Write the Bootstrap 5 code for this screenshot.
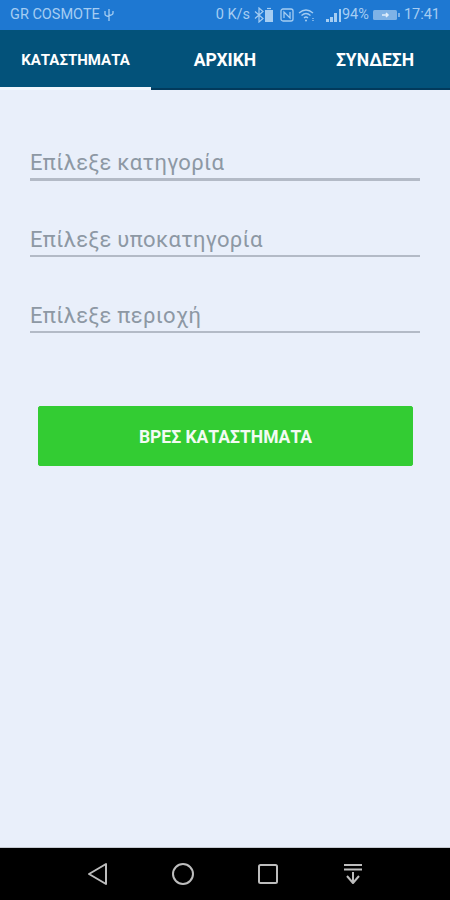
<!DOCTYPE html>
<html lang="el">
<head>
    <meta charset="UTF-8">
    <meta name="viewport" content="width=device-width, initial-scale=1.0">
    <title>Καταστήματα</title>
    <link href="https://cdn.jsdelivr.net/npm/bootstrap@5.3.0/dist/css/bootstrap.min.css" rel="stylesheet">
    <script src="https://cdn.jsdelivr.net/npm/bootstrap@5.3.0/dist/js/bootstrap.bundle.min.js"></script>
    <style>
        html, body {
            height: 900px;
            overflow: hidden;
        }
        body {
            background: #e9effa;
            font-family: Roboto, "Noto Sans", sans-serif;
        }
        .app-shell {
            height: 900px;
        }
        .status-strip {
            height: 30px;
            background: #1e78d2;
            color: #a5cdf2;
            font-size: 14.5px;
            padding: 0 10px;
        }
        .status-strip svg {
            display: block;
        }
        .signal-gap {
            margin-left: 10px;
        }
        .tab-strip {
            height: 60px;
            background: #03527a;
        }
        .tab-item {
            color: #fff;
            font-weight: 700;
            font-size: 17.5px;
            white-space: nowrap;
            height: 60px;
            text-decoration: none;
            padding-top: 3px;
            border-bottom: 2px solid #023a5c;
        }
        .tab-item.is-on {
            width: 151px;
            font-size: 15px;
            border-bottom: 3px solid #f1f5fc;
            padding-top: 4px;
        }
        .tab-mid {
            width: 148px;
        }
        .tab-end {
            width: 151px;
            padding-left: 1px;
        }
        .form-area {
            padding: 51px 30px 0;
        }
        .pick-field {
            height: 40px;
            font-size: 22px;
            line-height: 1;
            color: #8d98a4;
            border-bottom: 2px solid #b3bac6;
            margin-bottom: 36px;
            padding-top: 12px;
            letter-spacing: 0.3px;
        }
        .pick-field.first-pick {
            border-bottom-width: 3px;
            padding-top: 11px;
        }
        .find-btn {
            display: block;
            width: 375px;
            height: 60px;
            margin: 73px 0 0 8px;
            background: #33cc33;
            border-color: #33cc33;
            color: #f2fbf2;
            font-weight: 700;
            font-size: 17.5px;
            border-radius: 2px;
            padding: 2px 0 0;
        }
        .nav-strip {
            height: 53px;
            background: #000;
            border-top: 1px solid #c5c9d0;
        }
    </style>
</head>
<body>
<div class="app-shell d-flex flex-column">
    <!-- Status bar -->
    <div class="status-strip d-flex align-items-center flex-shrink-0">
        <span>GR COSMOTE</span>
        <svg class="ms-1" width="10" height="14" viewBox="0 0 10 14" fill="none" stroke="#a5cdf2" stroke-width="1.3"><path d="M5 1v12M1 3v3q0 2 4 2.5M9 3v2q0 2-4 2.5"/></svg>
        <span class="ms-auto">0 K/s</span>
        <svg class="ms-1" width="22" height="16" viewBox="0 0 22 16" fill="none" stroke="#a5cdf2" stroke-width="1.200"><path d="M1 4.500l8 7-4 3.500V1l4 3.500-8 7"/><rect x="11" y="3" width="8" height="12" fill="#a5cdf2" stroke="none"/><path d="M13 1.500h4"/></svg>
        <svg class="ms-1" width="14" height="14" viewBox="0 0 14 14" fill="none" stroke="#a5cdf2" stroke-width="1.3"><rect x="1" y="1" width="12" height="12" rx="2"/><path d="M4 10V4l6 6V4"/></svg>
        <svg class="ms-1" width="18" height="14" viewBox="0 0 18 14" fill="none" stroke="#a5cdf2" stroke-width="1.3"><path d="M1 5q7-6 14 0M3.5 7.500q4.500-4 9 0M6 10q2-2 4 0"/><circle cx="8" cy="12.500" r="1" fill="#a5cdf2" stroke="none"/><path d="M15 10v3" stroke-dasharray="1 1"/></svg>
        <svg class="signal-gap" width="16" height="13" viewBox="0 0 16 13" fill="#a5cdf2"><path d="M0 13v-3h3v3zM4 13V8h3v5zM8 13V4h3v9zM13 13V0h2v13z"/></svg>
        <span>94%</span>
        <svg class="ms-1" width="27" height="12" viewBox="0 0 27 12"><rect x="0" y="1" width="24" height="10" rx="1.500" fill="#7eb2e6"/><rect x="25" y="4" width="2" height="4" fill="#7eb2e6"/><path d="M9 6h6M13 4l2 2-2 2" stroke="#e1eefb" stroke-width="1.500" fill="none"/></svg>
        <span class="ms-1">17:41</span>
    </div>

    <!-- Tabs -->
    <div class="tab-strip d-flex flex-shrink-0">
        <a href="#" class="tab-item is-on d-flex align-items-center justify-content-center">ΚΑΤΑΣΤΗΜΑΤΑ</a>
        <a href="#" class="tab-item tab-mid d-flex align-items-center justify-content-center">ΑΡΧΙΚΗ</a>
        <a href="#" class="tab-item tab-end d-flex align-items-center justify-content-center">ΣΥΝΔΕΣΗ</a>
    </div>

    <!-- Search form -->
    <div class="form-area flex-grow-1">
        <div class="pick-field first-pick">Επίλεξε κατηγορία</div>
        <div class="pick-field">Επίλεξε υποκατηγορία</div>
        <div class="pick-field">Επίλεξε περιοχή</div>
        <button type="button" class="btn find-btn">ΒΡΕΣ ΚΑΤΑΣΤΗΜΑΤΑ</button>
    </div>

    <!-- Android nav bar -->
    <div class="nav-strip flex-shrink-0 position-relative">
        <svg width="450" height="52" viewBox="0 0 450 52" fill="none" stroke="#bdbdbd" stroke-width="2" stroke-linejoin="round">
            <path d="M106 16v20L89 26z"/>
            <circle cx="183" cy="26" r="10"/>
            <rect x="259" y="17" width="18" height="18" rx="1.500"/>
            <path d="M344 17h18M344 21.500h18M353 24v11M347 28l6 7 6-7"/>
        </svg>
    </div>
</div>
</body>
</html>
